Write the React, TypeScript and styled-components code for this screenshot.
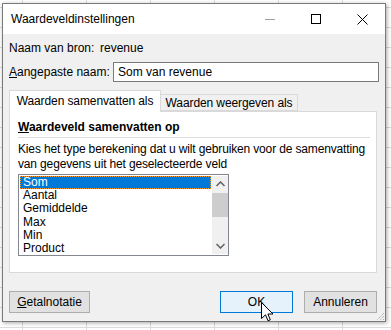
import styled, { createGlobalStyle } from "styled-components";

const GlobalStyle = createGlobalStyle`
    html, body {
        margin: 0;
        padding: 0;
        background: #ffffff;
    }
    * {
        box-sizing: border-box;
    }
`

const UI_FONT = `"Liberation Sans", Arial, sans-serif`

const Desktop = styled.div`
    position: relative;
    width: 391px;
    height: 330px;
    overflow: hidden;
    padding: 3px 0 0 2px;
    background-color: #ffffff;
    background-image:
        linear-gradient(to right, #dcdcdc 1px, transparent 1px),
        linear-gradient(to bottom, #dcdcdc 1px, transparent 1px);
    background-size: 64px 20px;
    background-position: 22px 7px;
    font-family: ${UI_FONT};
    font-size: 12px;
    color: #000;
    white-space: nowrap;
`

const Dialog = styled.div`
    width: 384px;
    height: 319px;
    border: 1px solid #7a7a7a;
    background: #f0f0f0;
    box-shadow: 1px 1px 4px rgba(0, 0, 0, 0.35);
    display: flex;
    flex-direction: column;
`

const TitleBar = styled.div`
    height: 30px;
    background: #ffffff;
    display: flex;
    align-items: center;
    flex-shrink: 0;
`

const Title = styled.div`
    flex: 1;
    padding-left: 8px;
    font-size: 12px;
    padding-bottom: 1px;
`

const CaptionButton = styled.div`
    width: 46px;
    height: 30px;
    display: flex;
    align-items: center;
    justify-content: center;
`

const Body = styled.div`
    flex: 1;
    padding: 4px 6px 0 6px;
    display: flex;
    flex-direction: column;
`

const InfoRow = styled.div`
    height: 20px;
    display: flex;
    align-items: center;
`

const InfoLabel = styled.span`
    width: 91px;
`

const NameRow = styled.div`
    margin-top: 4px;
    height: 20px;
    display: flex;
    align-items: center;
`

const NameLabel = styled.label`
    width: 104px;
`

const TextInput = styled.div`
    flex: 1;
    height: 20px;
    border: 1px solid #7a7a7a;
    background: #ffffff;
    padding-left: 4px;
    display: flex;
    align-items: center;
`

const TabStrip = styled.div`
    margin-top: 8px;
    height: 21px;
    display: flex;
    align-items: flex-end;
    position: relative;
    z-index: 1;
`

const Tab = styled.div<{ $active?: boolean }>`
    width: ${p => (p.$active ? "152px" : "137px")};
    height: ${p => (p.$active ? "22px" : "17px")};
    margin-bottom: ${p => (p.$active ? "-1px" : "0")};
    padding-bottom: ${p => (p.$active ? "2px" : "0")};
    background: ${p => (p.$active ? "#ffffff" : "#f0f0f0")};
    border: 1px solid #d9d9d9;
    border-bottom: ${p => (p.$active ? "none" : "1px solid #d9d9d9")};
    border-left: ${p => (p.$active ? "1px solid #d9d9d9" : "none")};
    display: flex;
    align-items: center;
    justify-content: center;
    letter-spacing: -0.1px;
`

const Panel = styled.div`
    height: 162px;
    margin-right: 2px;
    background: #ffffff;
    border: 1px solid #d9d9d9;
    padding: 7px 6px 0 8px;
    display: flex;
    flex-direction: column;
`

const GroupHeading = styled.div`
    font-weight: bold;
    line-height: 17px;
    padding-bottom: 1px;
    border-bottom: 1px solid #dcdcdc;
`

const Description = styled.p`
    margin: 4px 0 0 0;
    line-height: 15px;
    letter-spacing: -0.15px;
`

const ListBox = styled.div`
    margin-top: 2px;
    width: 211px;
    height: 82px;
    border: 1px solid #828790;
    background: #ffffff;
    display: flex;
    padding: 1px 0 1px 1px;
`

const Items = styled.div`
    flex: 1;
    display: flex;
    flex-direction: column;
    overflow: hidden;
`

const Item = styled.div<{ $selected?: boolean }>`
    flex: 0 0 13.2px;
    line-height: 13px;
    padding-left: 3px;
    background: ${p => (p.$selected ? "#0078d7" : "transparent")};
    color: ${p => (p.$selected ? "#ffffff" : "#000000")};
    outline: ${p => (p.$selected ? "1px dotted #f79a2c" : "none")};
    outline-offset: -1px;
`

const ScrollBar = styled.div`
    width: 16px;
    margin-left: 1px;
    background: #f0f0f0;
    display: flex;
    flex-direction: column;
`

const ScrollArrow = styled.div`
    height: 16px;
    display: flex;
    align-items: center;
    justify-content: center;
`

const Track = styled.div`
    flex: 1;
    display: flex;
    flex-direction: column;
`

const Thumb = styled.div`
    height: 24px;
    margin: 1px 0;
    background: #cdcdcd;
`

const ButtonRow = styled.div`
    margin-top: 18px;
    margin-right: 2px;
    display: flex;
    align-items: center;
    gap: 11px;
`

const Button = styled.div<{ $default?: boolean }>`
    width: ${p => (p.$default ? "73px" : "81px")};
    height: 22px;
    border: 1px solid ${p => (p.$default ? "#0078d7" : "#adadad")};
    background: ${p => (p.$default ? "#e5f1fb" : "#e1e1e1")};
    display: flex;
    align-items: center;
    justify-content: center;

    &.push {
        margin-left: auto;
    }
    &.narrow {
        width: 73px;
    }
`

const Grip = styled.svg`
    position: absolute;
    right: 6px;
    bottom: 9px;
`

const Cursor = styled.svg`
    position: absolute;
    left: 261px;
    top: 302px;
`

const functions = ["Som", "Aantal", "Gemiddelde", "Max", "Min", "Product"]

export default function App() {
    return (
        <Desktop>
            <GlobalStyle />
            <Dialog>
                <TitleBar>
                    <Title>Waardeveldinstellingen</Title>
                    <CaptionButton>
                        <svg width="10" height="10" viewBox="0 0 10 10">
                            <line x1="0" y1="5.5" x2="10" y2="5.5" stroke="#a0a0a0" strokeWidth="1" />
                        </svg>
                    </CaptionButton>
                    <CaptionButton>
                        <svg width="10" height="10" viewBox="0 0 10 10">
                            <rect x="0.5" y="0.5" width="9" height="9" fill="none" stroke="#000" strokeWidth="1" />
                        </svg>
                    </CaptionButton>
                    <CaptionButton>
                        <svg width="11" height="11" viewBox="0 0 11 11">
                            <path d="M0.5 0.5 L10.5 10.5 M10.5 0.5 L0.5 10.5" stroke="#000" strokeWidth="1" />
                        </svg>
                    </CaptionButton>
                </TitleBar>
                <Body>
                    <InfoRow>
                        <InfoLabel>Naam van bron:</InfoLabel>
                        <span>revenue</span>
                    </InfoRow>
                    <NameRow>
                        <NameLabel><u>A</u>angepaste naam:</NameLabel>
                        <TextInput>Som van revenue</TextInput>
                    </NameRow>
                    <TabStrip>
                        <Tab $active>Waarden samenvatten als</Tab>
                        <Tab>Waarden weergeven als</Tab>
                    </TabStrip>
                    <Panel>
                        <GroupHeading><u>W</u>aardeveld samenvatten op</GroupHeading>
                        <Description>
                            Kies het type berekening dat u wilt gebruiken voor de samenvatting
                            <br />
                            van gegevens uit het geselecteerde veld
                        </Description>
                        <ListBox>
                            <Items>
                                {functions.map((f, i) => (
                                    <Item key={f} $selected={i === 0}>{f}</Item>
                                ))}
                            </Items>
                            <ScrollBar>
                                <ScrollArrow>
                                    <svg width="9" height="6" viewBox="0 0 9 6">
                                        <path d="M0.5 5 L4.5 1 L8.5 5" fill="none" stroke="#606060" strokeWidth="1.5" />
                                    </svg>
                                </ScrollArrow>
                                <Track>
                                    <Thumb />
                                </Track>
                                <ScrollArrow>
                                    <svg width="9" height="6" viewBox="0 0 9 6">
                                        <path d="M0.5 1 L4.5 5 L8.5 1" fill="none" stroke="#606060" strokeWidth="1.5" />
                                    </svg>
                                </ScrollArrow>
                            </ScrollBar>
                        </ListBox>
                    </Panel>
                    <ButtonRow>
                        <Button><u>G</u>etalnotatie</Button>
                        <Button $default className="push">OK</Button>
                        <Button className="narrow">Annuleren</Button>
                    </ButtonRow>
                </Body>
            </Dialog>
            <Grip width="9" height="9" viewBox="0 0 9 9">
                <path d="M8 1 L1 8 M8 4 L4 8 M8 7 L7 8" stroke="#9a9a9a" strokeWidth="1" strokeDasharray="1 1" />
            </Grip>
            <Cursor width="13" height="20" viewBox="0 0 13 20">
                <path d="M0.5 0.5 L0.5 16.5 L4.5 12.8 L7 18.8 L9.3 17.8 L6.9 12 L12 12 Z" fill="#ffffff" stroke="#000000" strokeWidth="1" strokeLinejoin="miter" />
            </Cursor>
        </Desktop>
    )
}
